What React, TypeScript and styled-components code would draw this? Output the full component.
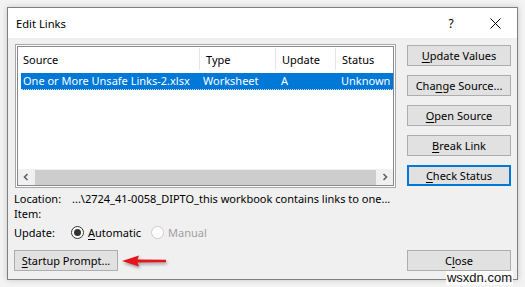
import React from 'react';
import styled, { createGlobalStyle } from 'styled-components';

const GlobalStyle = createGlobalStyle`
  html, body {
    margin: 0;
    padding: 0;
    background: #f3f3f3;
  }
  body {
    font-family: 'Noto Sans', 'Open Sans', sans-serif;
    font-size: 11px;
    color: #000;
  }
`;

const Page = styled.div`
  position: relative;
  width: 525px;
  height: 287px;
  padding: 7px;
  box-sizing: border-box;
`;

const Window = styled.div`
  width: 511px;
  height: 273px;
  box-sizing: border-box;
  border: 1px solid #7f7f7f;
  background: #f0f0f0;
  box-shadow: 0 0 6px rgba(0, 0, 0, 0.18);
  display: flex;
  flex-direction: column;
`;

const TitleBar = styled.div`
  height: 30px;
  background: #fff;
  display: flex;
  align-items: center;
  padding-left: 8px;
`;

const Title = styled.div`
  flex: 1;
  font-size: 11.2px;
`;

const CaptionButton = styled.div`
  width: 44px;
  height: 30px;
  display: flex;
  align-items: center;
  justify-content: center;
  font-size: 12px;
`;

const Body = styled.div`
  flex: 1;
  padding: 6px 6px 8px 7px;
  display: flex;
  flex-direction: column;
`;

const TopRow = styled.div`
  display: flex;
  gap: 11px;
`;

const ListFrame = styled.div`
  width: 381px;
  height: 144px;
  box-sizing: border-box;
  border: 1px solid #a6a6a6;
  padding: 1px;
  background: #fff;
`;

const ListView = styled.div`
  height: 100%;
  box-sizing: border-box;
  border: 1px solid #828790;
  display: flex;
  flex-direction: column;
  overflow: hidden;
`;

const HeaderRow = styled.div`
  display: flex;
  height: 22px;
  margin-top: 1px;
`;

const HeaderCell = styled.div<{ $w: number }>`
  flex: 0 0 ${(p) => p.$w}px;
  box-sizing: border-box;
  padding-left: ${(p) => (p.$w > 100 ? 5 : 6)}px;
  border-right: 1px solid #e5e5e5;
  display: flex;
  align-items: center;
  white-space: nowrap;
  overflow: hidden;
`;

const DataRow = styled.div`
  display: flex;
  height: 16px;
  margin: 3px 0 0 3px;
  background: #0078d7;
  color: #fff;
  border-bottom: 1px dotted rgba(255, 255, 255, 0.75);
`;

const DataCell = styled.div<{ $w: number; $pad: number }>`
  flex: 0 0 ${(p) => p.$w}px;
  box-sizing: border-box;
  padding-left: ${(p) => p.$pad}px;
  line-height: 16px;
  white-space: nowrap;
  overflow: hidden;
`;

const ListSpace = styled.div`
  flex: 1;
`;

const ScrollBar = styled.div`
  height: 16px;
  background: #f0f0f0;
  display: flex;
  align-items: center;
`;

const ScrollArrow = styled.div`
  width: 16px;
  height: 16px;
  display: flex;
  align-items: center;
  justify-content: center;
`;

const ScrollThumb = styled.div`
  flex: 1;
  height: 15px;
  background: #cdcdcd;
  margin: 0 1px;
`;

const ButtonColumn = styled.div`
  display: flex;
  flex-direction: column;
  gap: 9px;
  margin-top: 1px;
`;

const Button = styled.div<{ $focus?: boolean }>`
  width: 104px;
  height: 21px;
  box-sizing: border-box;
  background: #e1e1e1;
  border: ${(p) => (p.$focus ? '2px solid #0078d7' : '1px solid #adadad')};
  display: flex;
  align-items: center;
  justify-content: center;
  white-space: nowrap;
`;

const Key = styled.span`
  text-decoration: underline;
  text-underline-offset: 2px;
`;

const Info = styled.div`
  margin-top: 3px;
  display: grid;
  grid-template-columns: 57px 1fr;
  grid-template-rows: 15px 15px 23px;
  align-items: center;
  line-height: 15px;
  margin-left: -1px;
`;

const InfoLabel = styled.div`
  white-space: nowrap;
`;

const InfoValue = styled.div`
  white-space: nowrap;
  padding-left: 1px;
`;

const RadioRow = styled.div`
  display: flex;
  align-items: center;
`;

const RadioOption = styled.div<{ $disabled?: boolean }>`
  display: flex;
  align-items: center;
  gap: 4px;
  margin-right: 10px;
  color: ${(p) => (p.$disabled ? '#a0a0a0' : '#000')};
`;

const RadioCircle = styled.div<{ $checked?: boolean; $disabled?: boolean }>`
  width: 13px;
  height: 13px;
  box-sizing: border-box;
  border-radius: 50%;
  border: 1px solid ${(p) => (p.$disabled ? '#cccccc' : '#333')};
  background: #fff;
  display: flex;
  align-items: center;
  justify-content: center;
  &::after {
    content: '';
    width: 7px;
    height: 7px;
    border-radius: 50%;
    background: ${(p) => (p.$checked ? '#333' : 'transparent')};
  }
`;

const BottomRow = styled.div`
  margin-top: 6px;
  margin-left: -1px;
  display: flex;
  align-items: center;
`;

const Arrow = styled.svg`
  margin-left: 3px;
  filter: drop-shadow(1px 2px 1.5px rgba(0, 0, 0, 0.35));
`;

const Spacer = styled.div`
  flex: 1;
`;

const Watermark = styled.div`
  position: absolute;
  right: 12px;
  bottom: 2px;
  font-family: 'Liberation Sans', Arial, sans-serif;
  font-size: 13px;
  line-height: 14px;
  color: #111;
  background: rgba(255, 255, 255, 0.85);
  padding: 0 1px;
`;

const Chevron = ({ dir }: { dir: 'left' | 'right' }) => (
  <svg width="8" height="8" viewBox="0 0 8 8">
    <path
      d={dir === 'left' ? 'M5.5 1 L2.5 4 L5.5 7' : 'M2.5 1 L5.5 4 L2.5 7'}
      fill="none"
      stroke="#606060"
      strokeWidth="1.6"
    />
  </svg>
);

const columns = [
  { title: 'Source', w: 182, value: 'One or More Unsafe Links-2.xlsx', pad: 2 },
  { title: 'Type', w: 76, value: 'Worksheet', pad: 3 },
  { title: 'Update', w: 60, value: 'A', pad: 5 },
  { title: 'Status', w: 80, value: 'Unknown', pad: 5 },
];

const App = () => {
  return (
    <Page>
      <GlobalStyle />
      <Window>
        <TitleBar>
          <Title>Edit Links</Title>
          <CaptionButton>?</CaptionButton>
          <CaptionButton>
            <svg width="11" height="11" viewBox="0 0 11 11">
              <path d="M0.5 0.5 L10.5 10.5 M10.5 0.5 L0.5 10.5" stroke="#000" strokeWidth="1" />
            </svg>
          </CaptionButton>
        </TitleBar>
        <Body>
          <TopRow>
            <ListFrame>
              <ListView>
                <HeaderRow>
                  {columns.map((c) => (
                    <HeaderCell key={c.title} $w={c.w}>
                      {c.title}
                    </HeaderCell>
                  ))}
                </HeaderRow>
                <DataRow>
                  {columns.map((c, i) => (
                    <DataCell key={c.title} $w={i === 0 ? c.w - 3 : c.w} $pad={c.pad}>
                      {c.value}
                    </DataCell>
                  ))}
                </DataRow>
                <ListSpace />
                <ScrollBar>
                  <ScrollArrow>
                    <Chevron dir="left" />
                  </ScrollArrow>
                  <ScrollThumb />
                  <ScrollArrow>
                    <Chevron dir="right" />
                  </ScrollArrow>
                </ScrollBar>
              </ListView>
            </ListFrame>
            <ButtonColumn>
              <Button>
                <Key>U</Key>pdate Values
              </Button>
              <Button>
                Cha<Key>n</Key>ge Source...
              </Button>
              <Button>
                <Key>O</Key>pen Source
              </Button>
              <Button>
                <Key>B</Key>reak Link
              </Button>
              <Button $focus>
                <Key>C</Key>heck Status
              </Button>
            </ButtonColumn>
          </TopRow>
          <Info>
            <InfoLabel>Location:</InfoLabel>
            <InfoValue>...\2724_41-0058_DIPTO_this workbook contains links to one...</InfoValue>
            <InfoLabel>Item:</InfoLabel>
            <InfoValue />
            <InfoLabel>Update:</InfoLabel>
            <RadioRow>
              <RadioOption>
                <RadioCircle $checked />
                <span>
                  <Key>A</Key>utomatic
                </span>
              </RadioOption>
              <RadioOption $disabled>
                <RadioCircle $disabled />
                <span>Manual</span>
              </RadioOption>
            </RadioRow>
          </Info>
          <BottomRow>
            <Button>
              <Key>S</Key>tartup Prompt...
            </Button>
            <Arrow width="48" height="14" viewBox="0 0 48 14">
              <path d="M1 7 L18 1.5 L16.5 5.5 L45 5.8 L45 8.2 L16.5 8.5 L18 12.5 Z" fill="#e8141b" />
            </Arrow>
            <Spacer />
            <Button>
              C<Key>l</Key>ose
            </Button>
          </BottomRow>
        </Body>
      </Window>
      <Watermark>wsxdn.com</Watermark>
    </Page>
  );
};

export default App;
